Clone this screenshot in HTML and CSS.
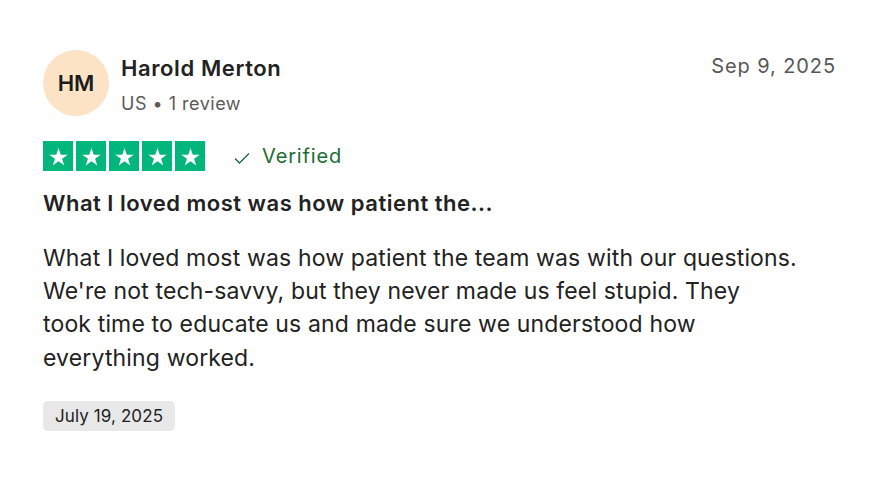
FILE: index.html
```html
<!DOCTYPE html>
<html lang="en">
<head>
<meta charset="utf-8">
<link rel="stylesheet" href="styles.css">
</head>
<body>
<article class="review">
  <header class="head">
    <div class="avatar">HM</div>
    <div class="who">
      <div class="name">Harold Merton</div>
      <div class="meta">US • 1 review</div>
    </div>
    <div class="date">Sep 9, 2025</div>
  </header>
  <div class="rating">
    <div class="stars">
      <span class="star"><svg viewBox="0 0 24 24"><path d="M12 3.2l2.35 6.9h7.3l-5.9 4.3 2.25 6.9L12 17l-5.99 4.3 2.25-6.9-5.9-4.3h7.3z" fill="#fff"/></svg></span>
      <span class="star"><svg viewBox="0 0 24 24"><path d="M12 3.2l2.35 6.9h7.3l-5.9 4.3 2.25 6.9L12 17l-5.99 4.3 2.25-6.9-5.9-4.3h7.3z" fill="#fff"/></svg></span>
      <span class="star"><svg viewBox="0 0 24 24"><path d="M12 3.2l2.35 6.9h7.3l-5.9 4.3 2.25 6.9L12 17l-5.99 4.3 2.25-6.9-5.9-4.3h7.3z" fill="#fff"/></svg></span>
      <span class="star"><svg viewBox="0 0 24 24"><path d="M12 3.2l2.35 6.9h7.3l-5.9 4.3 2.25 6.9L12 17l-5.99 4.3 2.25-6.9-5.9-4.3h7.3z" fill="#fff"/></svg></span>
      <span class="star"><svg viewBox="0 0 24 24"><path d="M12 3.2l2.35 6.9h7.3l-5.9 4.3 2.25 6.9L12 17l-5.99 4.3 2.25-6.9-5.9-4.3h7.3z" fill="#fff"/></svg></span>
    </div>
    <div class="verified">
      <svg class="check" viewBox="0 0 18 18"><path d="M2 9.5l4.5 4.5L16 4.5" fill="none" stroke="#1c6b35" stroke-width="1.4"/></svg>
      <span>Verified</span>
    </div>
  </div>
  <h2 class="title">What I loved most was how patient the...</h2>
  <p class="body">What I loved most was how patient the team was with our questions.<br>We're not tech-savvy, but they never made us feel stupid. They<br>took time to educate us and made sure we understood how<br>everything worked.</p>
  <div class="exp">July 19, 2025</div>
</article>
</body>
</html>
```
FILE: styles.css
```css
* { box-sizing: border-box; }
html, body { margin: 0; background: #fff; }
body {
  font-family: Inter, "Noto Sans", sans-serif;
  color: #1c1c1c;
}
.review {
  padding: 50px 60px 0 43px;
}
.head {
  display: flex;
  align-items: flex-start;
}
.avatar {
  width: 66px;
  height: 66px;
  border-radius: 50%;
  background: #fde3c5;
  display: flex;
  align-items: center;
  justify-content: center;
  font-size: 22px;
  font-weight: 600;
  color: #1c1c1c;
  flex: none;
}
.who {
  margin-left: 12px;
  padding-top: 4px;
  flex: 1;
}
.name {
  font-size: 22px;
  font-weight: 600;
  line-height: 28px;
  letter-spacing: 0.6px;
  color: #222;
}
.meta {
  margin-top: 10px;
  font-size: 18px;
  line-height: 24px;
  color: #5a5a5a;
  letter-spacing: 0.5px;
}
.date {
  padding-top: 3.5px;
  font-size: 20px;
  line-height: 24px;
  color: #575757;
  letter-spacing: 0.9px;
}
.rating {
  display: flex;
  align-items: center;
  margin-top: 25px;
}
.stars {
  display: flex;
  gap: 3px;
}
.star {
  width: 30px;
  height: 30px;
  background: #00b67a;
  display: flex;
  align-items: center;
  justify-content: center;
}
.star svg { width: 23px; height: 23px; }
.verified {
  display: flex;
  align-items: center;
  margin-left: 28px;
  color: #1c6b35;
  font-size: 20px;
  letter-spacing: 0.85px;
}
.check { width: 18px; height: 18px; margin-right: 11px; margin-top: 4px; }
.title {
  margin: 18px 0 0;
  font-size: 22px;
  font-weight: 600;
  line-height: 28px;
  letter-spacing: 0.5px;
  color: #222;
}
.body {
  margin: 24.7px 0 0;
  font-size: 23px;
  line-height: 33.3px;
  letter-spacing: 0.15px;
  color: #222;
}
.exp {
  width: fit-content;
  margin-top: 26px;
  background: #e8e8e8;
  border-radius: 5px;
  padding: 4px 12px;
  font-size: 17px;
  line-height: 22px;
  letter-spacing: 0.1px;
  color: #222;
}
```
